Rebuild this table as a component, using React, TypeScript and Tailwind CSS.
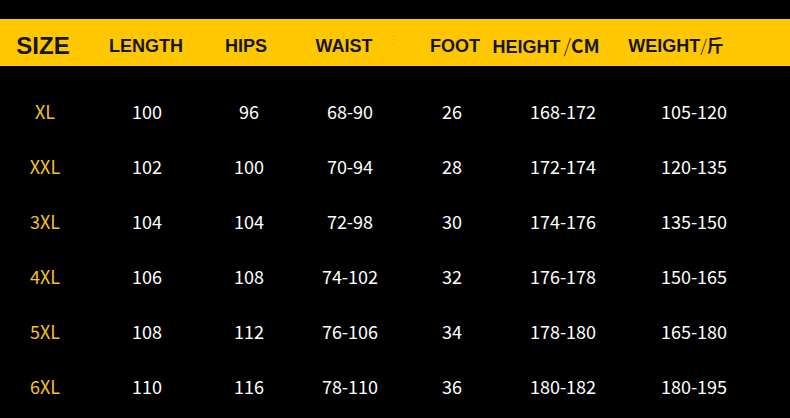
import { FC } from 'react';

const rows = [
  ['XL', '100', '96', '68-90', '26', '168-172', '105-120'],
  ['XXL', '102', '100', '70-94', '28', '172-174', '120-135'],
  ['3XL', '104', '104', '72-98', '30', '174-176', '135-150'],
  ['4XL', '106', '108', '74-102', '32', '176-178', '150-165'],
  ['5XL', '108', '112', '76-106', '34', '178-180', '165-180'],
  ['6XL', '110', '116', '78-110', '36', '180-182', '180-195'],
];

// cell widths so each column lands on its centre in the picture
const headW = ['w-[86px]', 'w-[120px]', 'w-[80px]', 'w-[116px]', 'w-[106px]', 'w-[76px]', 'w-[184px]'];
const dataW = ['w-[90px]', 'w-[114px]', 'w-[90px]', 'w-[112px]', 'w-[92px]', 'w-[130px]', 'w-[132px]'];

const cjk = { fontFamily: '"Noto Sans CJK SC", "Noto Sans", sans-serif' };

const App: FC = () => {
  return (
    <div className="w-[790px] h-[418px] bg-black overflow-hidden" style={{ fontFamily: '"Liberation Sans", Arial, sans-serif' }}>
      <div className="h-[19px]" />
      {/* yellow header band */}
      <div className="h-[47px] bg-[#fec700] flex items-center pt-[7px] text-[#161616] font-bold text-[18px] whitespace-nowrap">
        <div className={`${headW[0]} flex justify-center text-[24px]`}>SIZE</div>
        <div className={`${headW[1]} flex justify-center`}>LENGTH</div>
        <div className={`${headW[2]} flex justify-center`}>HIPS</div>
        <div className={`${headW[3]} flex justify-center`}>
          <span className="relative">
            WAIST
            <span className="absolute left-[72px] top-[-1px] text-[11px] font-normal text-[#d99a00] opacity-70">⋮</span>
          </span>
        </div>
        <div className={`${headW[4]} flex justify-center`}>FOOT</div>
        <div className={`${headW[5]} flex justify-center`}>
          <span>
            HEIGHT
            <span className="ml-[3px] text-[19px]" style={cjk}>
              <span className="font-light">/</span>
              <span className="font-bold">CM</span>
            </span>
          </span>
        </div>
        <div className={`${headW[6]} flex justify-center`}>
          <span>
            WEIGHT
            <span className="text-[17px]" style={cjk}>
              <span className="font-light">/</span>
              <span className="font-bold">斤</span>
            </span>
          </span>
        </div>
      </div>

      <div className="pt-[18px] font-normal" style={cjk}>
        {rows.map(r => (
          <div key={r[0]} className="h-[55px] flex items-center text-[18px] text-white whitespace-nowrap">
            {r.map((v, i) => (
              <div key={i} className={`${dataW[i]} flex justify-center ${i === 0 ? 'text-[#f3c22a]' : ''}`}>
                {v}
              </div>
            ))}
          </div>
        ))}
      </div>
    </div>
  );
};

export default App;
